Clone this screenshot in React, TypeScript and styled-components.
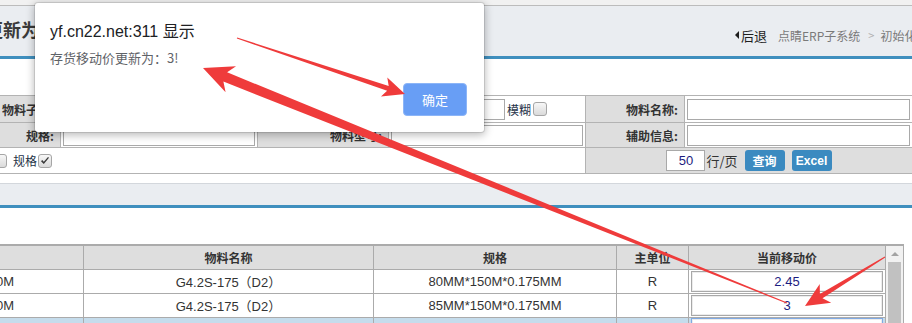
import React from "react";
import styled, { createGlobalStyle } from "styled-components";

const GlobalStyle = createGlobalStyle`
  html, body { margin: 0; padding: 0; background: #fff; }
  body {
    font-family: "Liberation Sans", "Noto Sans CJK SC", sans-serif;
    font-size: 12px;
    color: #333;
  }
  * { box-sizing: border-box; }
`;

const Page = styled.div`
  position: relative;
  width: 912px;
  height: 323px;
  overflow: hidden;
  background: #fff;
`;

const TopStrip = styled.div`
  height: 6px;
  background: #f1f1f1;
  border-bottom: 1px solid #bcbcbc;
`;

const Header = styled.div`
  height: 53px;
  background: #eaedf1;
  border-bottom: 3px solid #3f8fbe;
  display: flex;
  align-items: center;
  overflow: hidden;
`;

const Title = styled.div`
  flex: 0 0 750px;
  margin-left: -15px;
  margin-top: -4px;
  font-family: "Noto Sans CJK SC", sans-serif;
  font-size: 18px;
  font-weight: 700;
  color: #3a3a3a;
  white-space: nowrap;
`;

const Breadcrumb = styled.div`
  flex: none;
  display: flex;
  align-items: center;
  margin-top: 8px;
  white-space: nowrap;
  font-family: "Noto Sans CJK SC", sans-serif;
  font-size: 12px;
  color: #7a7a7a;
`;

const BackLink = styled.span`
  display: flex;
  align-items: center;
  font-size: 13px;
  color: #1e1e1e;
  margin-right: 11px;
  &::before {
    content: "";
    width: 0;
    height: 0;
    border-top: 4px solid transparent;
    border-bottom: 4px solid transparent;
    border-right: 4px solid #1e1e1e;
    margin-right: 2px;
  }
`;

const CrumbSep = styled.span`
  color: #b0b0b0;
  margin: 0 6px 0 8px;
  font-size: 11px;
`;

const Spacer = styled.div<{ $h: number }>`
  height: ${(p) => p.$h}px;
`;

const FormGrid = styled.div`
  display: grid;
  grid-template-columns: 60px 196px 130px 196px 98px 1fr;
  grid-template-rows: 26px 24px 25px;
  gap: 1px;
  padding: 1px 0;
  background: #b3b3b3;
`;

const LabelCell = styled.div`
  background: #dedede;
  display: flex;
  align-items: center;
  justify-content: flex-end;
  padding-right: 6px;
  font-family: "Noto Sans CJK SC", sans-serif;
  font-weight: 700;
  font-size: 12px;
  color: #333;
  white-space: nowrap;
  overflow: hidden;
`;

const InputCell = styled.div`
  background: #fff;
  display: flex;
  align-items: center;
  padding: 0 2px;
  gap: 2px;
  font-family: "Noto Sans CJK SC", sans-serif;
  font-size: 12px;
  white-space: nowrap;
`;

const TextBox = styled.div<{ $w?: number }>`
  height: 21px;
  width: ${(p) => (p.$w ? `${p.$w}px` : "100%")};
  flex: ${(p) => (p.$w ? "none" : "1")};
  background: #fff;
  border: 1px solid #a9a9a9;
`;

const Check = styled.span<{ $offset?: number }>`
  display: inline-flex;
  align-items: center;
  justify-content: center;
  width: 14px;
  height: 14px;
  flex: none;
  margin-left: ${(p) => p.$offset ?? 0}px;
  border: 1px solid #a6a6a6;
  border-radius: 3px;
  background: linear-gradient(#f7f7f7, #dadada);
`;

const CheckText = styled.span`
  color: #1f3348;
  font-family: "Noto Sans CJK SC", sans-serif;
  font-size: 12px;
`;

const OptionsCell = styled.div`
  grid-column: span 4;
  background: #fff;
  display: flex;
  align-items: center;
  gap: 6px;
`;

const PagerCell = styled.div`
  grid-column: span 2;
  background: #dedede;
  display: flex;
  align-items: center;
  justify-content: center;
  gap: 7px;
`;

const PageSizeBox = styled.div`
  width: 39px;
  height: 21px;
  background: #fff;
  border: 1px solid #a9a9a9;
  display: flex;
  align-items: center;
  justify-content: center;
  font-size: 13px;
  color: #1c1c80;
`;

const PagerText = styled.span`
  font-family: "Noto Sans CJK SC", sans-serif;
  font-size: 13px;
  color: #333;
  margin-left: -6px;
`;

const ActionButton = styled.div`
  width: 40px;
  height: 21px;
  border-radius: 3px;
  background: #3b8ac0;
  color: #fff;
  display: flex;
  align-items: center;
  justify-content: center;
  font-family: "Liberation Sans", "Noto Sans CJK SC", sans-serif;
  font-size: 12px;
  font-weight: 700;
`;

const SectionBar = styled.div`
  height: 25px;
  background: #eaedf1;
  border-top: 1px solid #d3d7dc;
  border-bottom: 3px solid #3f8fbe;
`;

const TableWrap = styled.div`
  display: flex;
  width: 904px;
  border-top: 2px solid #ababab;
  border-right: 1px solid #ababab;
`;

const DataTable = styled.div`
  width: 885px;
  display: grid;
  grid-template-columns: 83px 289px 242px 71px 1fr;
  grid-auto-rows: 23px;
  gap: 1px;
  background: #ababab;
`;

const HeadCell = styled.div`
  background: #dedede;
  display: flex;
  align-items: center;
  justify-content: center;
  font-family: "Noto Sans CJK SC", sans-serif;
  font-weight: 700;
  font-size: 12px;
  color: #333;
`;

const BodyCell = styled.div<{ $selected?: boolean; $left?: boolean }>`
  background: ${(p) => (p.$selected ? "#c5dcec" : "#fff")};
  display: flex;
  align-items: center;
  justify-content: ${(p) => (p.$left ? "flex-start" : "center")};
  padding: ${(p) => (p.$left ? "0" : "0 2px")};
  font-family: "Liberation Sans", "Noto Sans CJK SC", sans-serif;
  font-size: 13px;
  color: #333;
  white-space: nowrap;
  overflow: hidden;
`;

const CutText = styled.span`
  margin-left: -4px;
`;

const ValueBox = styled.div<{ $focused?: boolean }>`
  width: 100%;
  height: 21px;
  align-self: ${(p) => (p.$focused ? "flex-start" : "center")};
  background: #fff;
  border: 1px solid ${(p) => (p.$focused ? "#7fa9e3" : "#a8a8a8")};
  box-shadow: inset 0 0 0 1px #ececec;
  display: flex;
  align-items: center;
  justify-content: center;
  font-size: 13px;
  color: #1c1c80;
`;

const Scrollbar = styled.div`
  width: 18px;
  border-left: 1px solid #ababab;
  background: #f1f1f1;
  display: flex;
  flex-direction: column;
  align-items: center;
`;

const ScrollArrow = styled.div`
  height: 16px;
  display: flex;
  align-items: center;
  justify-content: center;
  &::before {
    content: "";
    border-left: 4px solid transparent;
    border-right: 4px solid transparent;
    border-bottom: 4px solid #a3a3a3;
  }
`;

const ScrollThumb = styled.div`
  width: 13px;
  flex: 1;
  background: #c1c1c1;
`;

const Dialog = styled.div`
  position: absolute;
  left: 35px;
  top: 3px;
  width: 449px;
  height: 129px;
  background: #fff;
  border-radius: 3px;
  box-shadow: 0 0 0 1px rgba(0, 0, 0, 0.1), 0 2px 8px 1px rgba(0, 0, 0, 0.28);
  padding: 19px 17px 16px 15px;
  display: flex;
  flex-direction: column;
`;

const DialogTitle = styled.div`
  font-family: "Liberation Sans", "Noto Sans CJK SC", sans-serif;
  font-size: 16px;
  line-height: 20px;
  color: #202124;
`;

const DialogMessage = styled.div`
  margin-top: 7px;
  font-family: "Noto Sans CJK SC", sans-serif;
  font-size: 13px;
  line-height: 18px;
  color: #5f6368;
`;

const DialogActions = styled.div`
  margin-top: auto;
  display: flex;
  justify-content: flex-end;
`;

const OkButton = styled.div`
  width: 64px;
  height: 33px;
  border-radius: 4px;
  background: #689ef5;
  border: 1px solid #8cb5f7;
  color: #fff;
  display: flex;
  align-items: center;
  justify-content: center;
  font-family: "Noto Sans CJK SC", sans-serif;
  font-size: 13px;
`;

const Annotations = styled.svg`
  position: absolute;
  left: 0;
  top: 0;
  pointer-events: none;
`;

const CheckMark = () => (
  <svg width="10" height="10" viewBox="0 0 10 10">
    <path d="M1 5.2 L3.8 8 L9 1.8 L8 1 L3.8 5.8 L2.2 4 Z" fill="#3a3a3a" />
  </svg>
);

const rows = [
  { code: "0M", name: "G4.2S-175（D2）", spec: "80MM*150M*0.175MM", unit: "R", price: "2.45" },
  { code: "0M", name: "G4.2S-175（D2）", spec: "85MM*150M*0.175MM", unit: "R", price: "3" },
];

export default function App() {
  return (
    <>
      <GlobalStyle />
      <Page>
        <TopStrip />
        <Header>
          <Title>更新为存货移动价</Title>
          <Breadcrumb>
            <BackLink>后退</BackLink>
            <span>点睛ERP子系统</span>
            <CrumbSep>&gt;</CrumbSep>
            <span>初始化设置</span>
          </Breadcrumb>
        </Header>
        <Spacer $h={36} />
        <FormGrid>
          <LabelCell>物料子类:</LabelCell>
          <InputCell>
            <TextBox />
          </InputCell>
          <LabelCell>物料编码:</LabelCell>
          <InputCell>
            <TextBox $w={114} />
            <CheckText>模糊</CheckText>
            <Check />
          </InputCell>
          <LabelCell>物料名称:</LabelCell>
          <InputCell>
            <TextBox />
          </InputCell>

          <LabelCell>规格:</LabelCell>
          <InputCell>
            <TextBox />
          </InputCell>
          <LabelCell>物料型号:</LabelCell>
          <InputCell>
            <TextBox />
          </InputCell>
          <LabelCell>辅助信息:</LabelCell>
          <InputCell>
            <TextBox />
          </InputCell>

          <OptionsCell>
            <Check $offset={-7} />
            <CheckText>规格</CheckText>
            <Check $offset={-5}>
              <CheckMark />
            </Check>
          </OptionsCell>
          <PagerCell>
            <PageSizeBox>50</PageSizeBox>
            <PagerText>行/页</PagerText>
            <ActionButton>查询</ActionButton>
            <ActionButton>Excel</ActionButton>
          </PagerCell>
        </FormGrid>
        <Spacer $h={9} />
        <SectionBar />
        <Spacer $h={36} />
        <TableWrap>
          <DataTable>
            <HeadCell />
            <HeadCell>物料名称</HeadCell>
            <HeadCell>规格</HeadCell>
            <HeadCell>主单位</HeadCell>
            <HeadCell>当前移动价</HeadCell>
            {rows.map((r, i) => (
              <React.Fragment key={i}>
                <BodyCell $left>
                  <CutText>{r.code}</CutText>
                </BodyCell>
                <BodyCell>{r.name}</BodyCell>
                <BodyCell>{r.spec}</BodyCell>
                <BodyCell>{r.unit}</BodyCell>
                <BodyCell>
                  <ValueBox>{r.price}</ValueBox>
                </BodyCell>
              </React.Fragment>
            ))}
            <BodyCell $selected />
            <BodyCell $selected />
            <BodyCell $selected />
            <BodyCell $selected />
            <BodyCell $selected>
              <ValueBox $focused />
            </BodyCell>
          </DataTable>
          <Scrollbar>
            <ScrollArrow />
            <ScrollThumb />
          </Scrollbar>
        </TableWrap>

        <Dialog>
          <DialogTitle>yf.cn22.net:311 显示</DialogTitle>
          <DialogMessage>存货移动价更新为：3!</DialogMessage>
          <DialogActions>
            <OkButton>确定</OkButton>
          </DialogActions>
        </Dialog>

        <Annotations width="912" height="323" viewBox="0 0 912 323">
          <polygon
            fill="#ef3b3b"
            points="236.84,38.47 387.13,90.68 380.97,96.53 405,94 387.29,77.55 388.71,85.94 237.16,37.53"
          />
          <polygon
            fill="#ef3b3b"
            points="203,68 225.6,92.19 223.4,81.6 786.81,303.46 787.19,302.54 227.13,72.32 236.06,66.21"
          />
          <polygon
            fill="#ef3b3b"
            points="884.74,256.57 819.89,293.95 819.72,284.08 805,306 831.22,302.84 822.51,298.21 885.26,257.43"
          />
        </Annotations>
      </Page>
    </>
  );
}
